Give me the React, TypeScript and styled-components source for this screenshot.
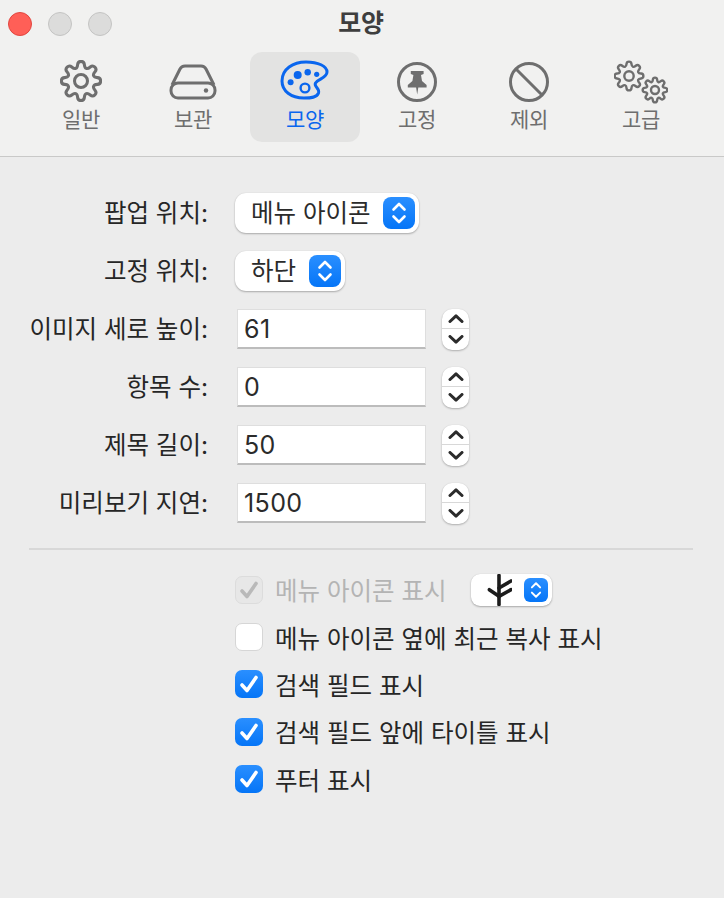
import * as React from 'react';
import styled, { createGlobalStyle } from 'styled-components';

const GlobalStyle = createGlobalStyle`
    html, body {
        margin: 0;
        padding: 0;
        background: #ececec;
    }
`;

const Window = styled.div`
    width: 724px;
    height: 898px;
    background: #ececec;
    font-family: 'Inter', 'Noto Sans CJK KR', sans-serif;
    color: #2b2b2b;
    overflow: hidden;
`;

const Header = styled.header`
    box-sizing: border-box;
    height: 157px;
    background: #f1f1f0;
    border-bottom: 1px solid #c9c9c8;
    display: flex;
    flex-direction: column;
`;

const TitleBar = styled.div`
    height: 52px;
    display: grid;
    grid-template-columns: 1fr auto 1fr;
    align-items: center;
    padding: 0 8px;
    box-sizing: border-box;
`;

const Lights = styled.div`
    display: flex;
    gap: 16px;
    margin-bottom: 4px;
`;

const Light = styled.span<{ $color: string; $edge: string }>`
    width: 24px;
    height: 24px;
    box-sizing: border-box;
    border-radius: 50%;
    background: ${p => p.$color};
    border: 1px solid ${p => p.$edge};
`;

const Title = styled.h1`
    margin: 0 2px 10px 0;
    font-size: 25px;
    font-weight: 700;
    color: #3e3e3e;
    letter-spacing: -0.3px;
`;

const Toolbar = styled.nav`
    display: flex;
    gap: 2px;
    padding-left: 26px;
`;

const Tab = styled.div<{ $active?: boolean }>`
    width: 110px;
    height: 90px;
    border-radius: 12px;
    display: flex;
    flex-direction: column;
    align-items: center;
    background: ${p => (p.$active ? '#e3e3e2' : 'transparent')};
    color: ${p => (p.$active ? '#0a66ee' : '#6e6e6e')};
`;

const TabIcon = styled.div`
    height: 50px;
    display: flex;
    align-items: flex-end;
    justify-content: center;
`;

const TabLabel = styled.span`
    font-size: 21px;
    line-height: 30px;
    margin-top: 3px;
    letter-spacing: -0.2px;
`;

const Form = styled.main`
    display: grid;
    grid-template-columns: 208px auto;
    justify-content: start;
    align-items: center;
    column-gap: 27px;
    padding-top: 27px;
`;

const Label = styled.label`
    height: 58px;
    box-sizing: border-box;
    padding-bottom: 3px;
    display: flex;
    align-items: center;
    justify-content: flex-end;
    font-size: 24.5px;
    color: #262626;
    white-space: nowrap;
`;

const PopupCell = styled.div`
    height: 58px;
    display: flex;
    align-items: center;
`;

const Popup = styled.div<{ $gap: number }>`
    height: 40px;
    box-sizing: border-box;
    display: inline-flex;
    align-items: center;
    gap: ${p => p.$gap}px;
    padding: 0 4px 0 16px;
    background: #fff;
    border-radius: 11px;
    font-size: 24.5px;
    color: #2b2b2b;
    box-shadow: 0 1px 2px rgba(0, 0, 0, 0.28), 0 0 1px rgba(0, 0, 0, 0.12);
`;

const PopupText = styled.span`
    margin-bottom: 3px;
`;

const Chevrons = styled.span<{ $small?: boolean }>`
    width: ${p => (p.$small ? 24 : 32)}px;
    height: ${p => (p.$small ? 24 : 32)}px;
    border-radius: ${p => (p.$small ? 6 : 8)}px;
    background: linear-gradient(#2a8fff, #0575f7);
    display: flex;
    align-items: center;
    justify-content: center;
`;

const FieldCell = styled.div`
    height: 58px;
    display: flex;
    align-items: center;
    gap: 16px;
    padding-left: 2px;
`;

const Field = styled.div`
    width: 189px;
    height: 40px;
    box-sizing: border-box;
    padding-left: 6px;
    background: #fff;
    border: 1px solid #dedede;
    border-bottom: 2px solid #bcbcbc;
    display: flex;
    align-items: center;
    font-size: 25px;
    letter-spacing: 0.4px;
    color: #2b2b2b;
`;

const Stepper = styled.div`
    width: 27px;
    height: 41px;
    border-radius: 10px;
    background: #fff;
    box-shadow: 0 1px 2px rgba(0, 0, 0, 0.25), 0 0 1px rgba(0, 0, 0, 0.12);
    display: grid;
    grid-template-rows: 1fr 1fr;
    overflow: hidden;
`;

const StepButton = styled.span<{ $top?: boolean }>`
    display: flex;
    align-items: center;
    justify-content: center;
    border-bottom: ${p => (p.$top ? '1px solid #d8d8d8' : 'none')};
`;

const Divider = styled.hr`
    margin: 16px 31px 0 29px;
    border: none;
    border-top: 2px solid #d8d8d8;
`;

const Options = styled.section`
    padding: 16px 0 0 235px;
    display: flex;
    flex-direction: column;
`;

const OptionRow = styled.div<{ $disabled?: boolean }>`
    height: 47.4px;
    display: flex;
    align-items: center;
    gap: 12px;
    font-size: 24.5px;
    white-space: nowrap;
    color: ${p => (p.$disabled ? '#b4b4b4' : '#262626')};
`;

const Box = styled.span<{ $state: 'on' | 'off' | 'disabled' }>`
    width: 28px;
    height: 28px;
    flex: none;
    box-sizing: border-box;
    border-radius: 7px;
    display: flex;
    align-items: center;
    justify-content: center;
    background: ${p =>
        p.$state === 'on'
            ? 'linear-gradient(#2a8fff, #0575f7)'
            : p.$state === 'disabled'
            ? '#e7e7e7'
            : '#fff'};
    border: ${p =>
        p.$state === 'on'
            ? 'none'
            : p.$state === 'disabled'
            ? '1px solid #dcdcdc'
            : '1px solid #d6d6d6'};
`;

const IconPopup = styled.div`
    width: 81px;
    height: 32px;
    margin-left: 12px;
    box-sizing: border-box;
    padding: 0 4px 0 15px;
    display: flex;
    align-items: center;
    justify-content: space-between;
    background: #fff;
    border-radius: 9px;
    box-shadow: 0 1px 2px rgba(0, 0, 0, 0.28), 0 0 1px rgba(0, 0, 0, 0.12);
`;

const GearsSvg = styled.svg`
    margin-bottom: -2px;
`;

// rounded cog outline: tooth polygon smoothed through its edge midpoints
const gearPath = (cx: number, cy: number, r: number, teeth = 8): string => {
    const outer = r * 1.04;
    const inner = r * 0.72;
    const step = (Math.PI * 2) / teeth;
    const pts: [number, number][] = [];
    for (let i = 0; i < teeth; i++) {
        const a = i * step - Math.PI / 2;
        [
            [inner, a - step * 0.34],
            [outer, a - step * 0.2],
            [outer, a + step * 0.2],
            [inner, a + step * 0.34]
        ].forEach(([rad, ang]) => {
            pts.push([cx + rad * Math.cos(ang), cy + rad * Math.sin(ang)]);
        });
    }
    const mid = (i: number): string => {
        const p = pts[i % pts.length];
        const q = pts[(i + 1) % pts.length];
        return `${((p[0] + q[0]) / 2).toFixed(2)} ${((p[1] + q[1]) / 2).toFixed(2)}`;
    };
    let d = `M${mid(pts.length - 1)} `;
    pts.forEach((p, i) => {
        d += `Q${p[0].toFixed(2)} ${p[1].toFixed(2)} ${mid(i)} `;
    });
    return d + 'Z';
};

const GearIcon = () => (
    <svg width="42" height="42" viewBox="0 0 44 44" fill="none" stroke="currentColor" strokeLinejoin="round">
        <path d={gearPath(22, 22, 20)} strokeWidth="3.2" />
        <circle cx="22" cy="22" r="6.8" strokeWidth="3.2" />
    </svg>
);

const DriveIcon = () => (
    <svg width="48" height="38" viewBox="0 0 48 38" fill="none" stroke="currentColor" strokeWidth="3" strokeLinejoin="round">
        <path d="M3 21 L11 5 Q12.5 2 16 2 H32 Q35.5 2 37 5 L45 21" />
        <rect x="2" y="19" width="44" height="15" rx="7" />
        <circle cx="37" cy="26.5" r="2.2" fill="currentColor" stroke="none" />
    </svg>
);

const PaletteIcon = () => (
    <svg width="50" height="42" viewBox="0 0 50 42" fill="none" stroke="currentColor" strokeWidth="3">
        <path d="M2 21 C2 9 13 2 26 2 C38 2 47 6 47 12 C47 18 38 19 35.5 23 C33.5 27 40 28 38.5 33 C37 37.5 31 38 24 38 C11 38 2 31 2 21 Z" />
        <circle cx="25" cy="28" r="4.4" strokeWidth="2.4" />
        <circle cx="10.6" cy="22.3" r="3" fill="currentColor" stroke="none" />
        <circle cx="17.7" cy="15" r="4" fill="currentColor" stroke="none" />
        <circle cx="27.7" cy="12.3" r="3.2" fill="currentColor" stroke="none" />
        <circle cx="36.7" cy="14.3" r="2.6" fill="currentColor" stroke="none" />
    </svg>
);

const PinIcon = () => (
    <svg width="40" height="40" viewBox="0 0 40 40" fill="none">
        <circle cx="20" cy="20" r="18.5" stroke="currentColor" strokeWidth="3" />
        <path
            d="M13.8 9 H26.6 V12 L24 13 L25 19 L29.6 23 V25.5 H21.3 L20.2 32.5 L19.1 25.5 H10.8 V23 L15.4 19 L16.4 13 L13.8 12 Z"
            fill="currentColor"
        />
    </svg>
);

const BlockIcon = () => (
    <svg width="40" height="40" viewBox="0 0 40 40" fill="none" stroke="currentColor" strokeWidth="3">
        <circle cx="20" cy="20" r="18.5" />
        <path d="M7 7 L33 33" />
    </svg>
);

const GearsIcon = () => (
    <GearsSvg width="54" height="44" viewBox="0 0 54 44" fill="none" stroke="currentColor" strokeWidth="2.4" strokeLinejoin="round">
        <path d={gearPath(15, 16, 14)} />
        <circle cx="15" cy="16" r="4.7" />
        <path d={gearPath(41, 30, 12)} />
        <circle cx="41" cy="30" r="4" />
    </GearsSvg>
);

const UpDown = ({ small }: { small?: boolean }) => (
    <svg width={small ? 12 : 16} height={small ? 18 : 24} viewBox="0 0 16 24" fill="none" stroke="#fff" strokeWidth="2.6" strokeLinecap="round" strokeLinejoin="round">
        <path d="M2.5 8.5 L8 3 L13.5 8.5" />
        <path d="M2.5 15.5 L8 21 L13.5 15.5" />
    </svg>
);

const Caret = ({ up }: { up?: boolean }) => (
    <svg width="16" height="9" viewBox="0 0 16 9" fill="none" stroke="#2b2b2b" strokeWidth="3" strokeLinecap="round" strokeLinejoin="round">
        <path d={up ? 'M2 7.5 L8 1.8 L14 7.5' : 'M2 1.5 L8 7.2 L14 1.5'} />
    </svg>
);

const Check = ({ color }: { color: string }) => (
    <svg width="20" height="20" viewBox="0 0 20 20" fill="none" stroke={color} strokeWidth="3.6" strokeLinecap="round" strokeLinejoin="round">
        <path d="M3 11 L8 16.5 L17 3.5" />
    </svg>
);

const ClipIcon = () => (
    <svg width="26" height="32" viewBox="0 0 26 32" fill="none" stroke="#1c1c1c" strokeWidth="3.6" strokeLinecap="round">
        <path d="M13 1.5 V30.5" />
        <path d="M3.3 15.7 L13 22.3" />
        <path d="M25 7 L13 14" />
        <path d="M25 15.7 L13 22.3" />
    </svg>
);

const tabs = [
    { label: '일반', icon: <GearIcon /> },
    { label: '보관', icon: <DriveIcon /> },
    { label: '모양', icon: <PaletteIcon />, active: true },
    { label: '고정', icon: <PinIcon /> },
    { label: '제외', icon: <BlockIcon /> },
    { label: '고급', icon: <GearsIcon /> }
];

const fields = [
    { label: '이미지 세로 높이:', value: '61' },
    { label: '항목 수:', value: '0' },
    { label: '제목 길이:', value: '50' },
    { label: '미리보기 지연:', value: '1500' }
];

const checks: { label: string; state: 'on' | 'off' }[] = [
    { label: '메뉴 아이콘 옆에 최근 복사 표시', state: 'off' },
    { label: '검색 필드 표시', state: 'on' },
    { label: '검색 필드 앞에 타이틀 표시', state: 'on' },
    { label: '푸터 표시', state: 'on' }
];

export default function App() {
    return (
        <Window>
            <GlobalStyle />
            <Header>
                <TitleBar>
                    <Lights>
                        <Light $color="#ff5f57" $edge="#e2463f" />
                        <Light $color="#dcdcdb" $edge="#c4c4c3" />
                        <Light $color="#dcdcdb" $edge="#c4c4c3" />
                    </Lights>
                    <Title>모양</Title>
                </TitleBar>
                <Toolbar>
                    {tabs.map(tab => (
                        <Tab key={tab.label} $active={tab.active}>
                            <TabIcon>{tab.icon}</TabIcon>
                            <TabLabel>{tab.label}</TabLabel>
                        </Tab>
                    ))}
                </Toolbar>
            </Header>
            <Form>
                <Label>팝업 위치:</Label>
                <PopupCell>
                    <Popup $gap={12}>
                        <PopupText>메뉴 아이콘</PopupText>
                        <Chevrons>
                            <UpDown />
                        </Chevrons>
                    </Popup>
                </PopupCell>
                <Label>고정 위치:</Label>
                <PopupCell>
                    <Popup $gap={13}>
                        <PopupText>하단</PopupText>
                        <Chevrons>
                            <UpDown />
                        </Chevrons>
                    </Popup>
                </PopupCell>
                {fields.map(field => (
                    <React.Fragment key={field.label}>
                        <Label>{field.label}</Label>
                        <FieldCell>
                            <Field>{field.value}</Field>
                            <Stepper>
                                <StepButton $top>
                                    <Caret up />
                                </StepButton>
                                <StepButton>
                                    <Caret />
                                </StepButton>
                            </Stepper>
                        </FieldCell>
                    </React.Fragment>
                ))}
            </Form>
            <Divider />
            <Options>
                <OptionRow $disabled>
                    <Box $state="disabled">
                        <Check color="#b9b9b9" />
                    </Box>
                    메뉴 아이콘 표시
                    <IconPopup>
                        <ClipIcon />
                        <Chevrons $small>
                            <UpDown small />
                        </Chevrons>
                    </IconPopup>
                </OptionRow>
                {checks.map(check => (
                    <OptionRow key={check.label}>
                        <Box $state={check.state}>
                            {check.state === 'on' && <Check color="#fff" />}
                        </Box>
                        {check.label}
                    </OptionRow>
                ))}
            </Options>
        </Window>
    );
}
